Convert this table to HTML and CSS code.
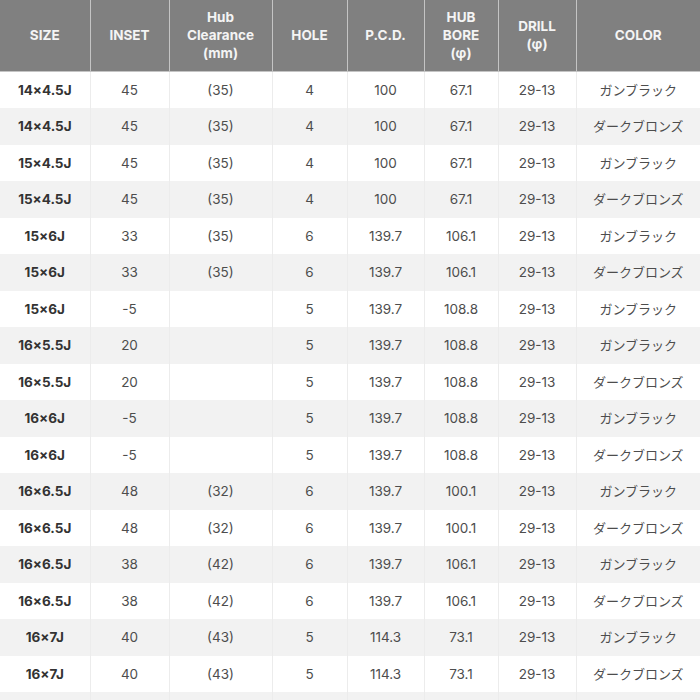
FILE: index.html
```html
<!DOCTYPE html>
<html lang="ja">
<head>
<meta charset="utf-8">
<link rel="stylesheet" href="styles.css">
</head>
<body>
<table class="spec">
  <colgroup>
    <col class="c-size"><col class="c-inset"><col class="c-hub"><col class="c-hole">
    <col class="c-pcd"><col class="c-bore"><col class="c-drill"><col class="c-color">
  </colgroup>
  <thead>
    <tr>
      <th>SIZE</th>
      <th>INSET</th>
      <th>Hub<br>Clearance<br>(mm)</th>
      <th>HOLE</th>
      <th>P.C.D.</th>
      <th>HUB<br>BORE<br>(φ)</th>
      <th>DRILL<br>(φ)</th>
      <th>COLOR</th>
    </tr>
  </thead>
  <tbody>
    <tr><td class="size">14×4.5J</td><td>45</td><td>(35)</td><td>4</td><td>100</td><td>67.1</td><td>29-13</td><td class="jp">ガンブラック</td></tr>
    <tr><td class="size">14×4.5J</td><td>45</td><td>(35)</td><td>4</td><td>100</td><td>67.1</td><td>29-13</td><td class="jp">ダークブロンズ</td></tr>
    <tr><td class="size">15×4.5J</td><td>45</td><td>(35)</td><td>4</td><td>100</td><td>67.1</td><td>29-13</td><td class="jp">ガンブラック</td></tr>
    <tr><td class="size">15×4.5J</td><td>45</td><td>(35)</td><td>4</td><td>100</td><td>67.1</td><td>29-13</td><td class="jp">ダークブロンズ</td></tr>
    <tr><td class="size">15×6J</td><td>33</td><td>(35)</td><td>6</td><td>139.7</td><td>106.1</td><td>29-13</td><td class="jp">ガンブラック</td></tr>
    <tr><td class="size">15×6J</td><td>33</td><td>(35)</td><td>6</td><td>139.7</td><td>106.1</td><td>29-13</td><td class="jp">ダークブロンズ</td></tr>
    <tr><td class="size">15×6J</td><td>-5</td><td></td><td>5</td><td>139.7</td><td>108.8</td><td>29-13</td><td class="jp">ガンブラック</td></tr>
    <tr><td class="size">16×5.5J</td><td>20</td><td></td><td>5</td><td>139.7</td><td>108.8</td><td>29-13</td><td class="jp">ガンブラック</td></tr>
    <tr><td class="size">16×5.5J</td><td>20</td><td></td><td>5</td><td>139.7</td><td>108.8</td><td>29-13</td><td class="jp">ダークブロンズ</td></tr>
    <tr><td class="size">16×6J</td><td>-5</td><td></td><td>5</td><td>139.7</td><td>108.8</td><td>29-13</td><td class="jp">ガンブラック</td></tr>
    <tr><td class="size">16×6J</td><td>-5</td><td></td><td>5</td><td>139.7</td><td>108.8</td><td>29-13</td><td class="jp">ダークブロンズ</td></tr>
    <tr><td class="size">16×6.5J</td><td>48</td><td>(32)</td><td>6</td><td>139.7</td><td>100.1</td><td>29-13</td><td class="jp">ガンブラック</td></tr>
    <tr><td class="size">16×6.5J</td><td>48</td><td>(32)</td><td>6</td><td>139.7</td><td>100.1</td><td>29-13</td><td class="jp">ダークブロンズ</td></tr>
    <tr><td class="size">16×6.5J</td><td>38</td><td>(42)</td><td>6</td><td>139.7</td><td>106.1</td><td>29-13</td><td class="jp">ガンブラック</td></tr>
    <tr><td class="size">16×6.5J</td><td>38</td><td>(42)</td><td>6</td><td>139.7</td><td>106.1</td><td>29-13</td><td class="jp">ダークブロンズ</td></tr>
    <tr><td class="size">16×7J</td><td>40</td><td>(43)</td><td>5</td><td>114.3</td><td>73.1</td><td>29-13</td><td class="jp">ガンブラック</td></tr>
    <tr><td class="size">16×7J</td><td>40</td><td>(43)</td><td>5</td><td>114.3</td><td>73.1</td><td>29-13</td><td class="jp">ダークブロンズ</td></tr>
    <tr><td></td><td></td><td></td><td></td><td></td><td></td><td></td><td></td></tr>
  </tbody>
</table>
</body>
</html>
```

FILE: styles.css
```css
html, body {
  margin: 0;
  padding: 0;
  background: #ffffff;
}

body {
  font-family: Inter, "Noto Sans", "Noto Sans CJK JP", sans-serif;
  font-size: 13.5px;
  color: #4d4d4d;
}

.spec {
  width: 700px;
  table-layout: fixed;
  border-collapse: collapse;
  border-spacing: 0;
}

.c-size { width: 90px; }
.c-inset { width: 79px; }
.c-hub { width: 103px; }
.c-hole { width: 75px; }
.c-pcd { width: 77px; }
.c-bore { width: 74px; }
.c-drill { width: 78px; }
.c-color { width: 124px; }

.spec th {
  height: 70.5px;
  padding: 0;
  background: #808080;
  color: #f4f4f4;
  font-weight: 700;
  font-size: 13.5px;
  line-height: 18px;
  text-align: center;
  vertical-align: middle;
  border-left: 1px solid #c4c4c4;
  border-bottom: 1px solid #c4c4c4;
}

.spec th:first-child,
.spec td:first-child {
  border-left: none;
}

.spec td {
  height: 36.5px;
  padding: 0;
  text-align: center;
  vertical-align: middle;
  line-height: 18px;
  border-left: 1px solid #ececec;
}

.spec tbody tr:nth-child(even) td {
  background: #f2f2f2;
}

.spec td.size {
  font-weight: 700;
  color: #333333;
}

.spec td.jp {
  font-family: "Noto Sans CJK JP", sans-serif;
  font-size: 13px;
}
```
